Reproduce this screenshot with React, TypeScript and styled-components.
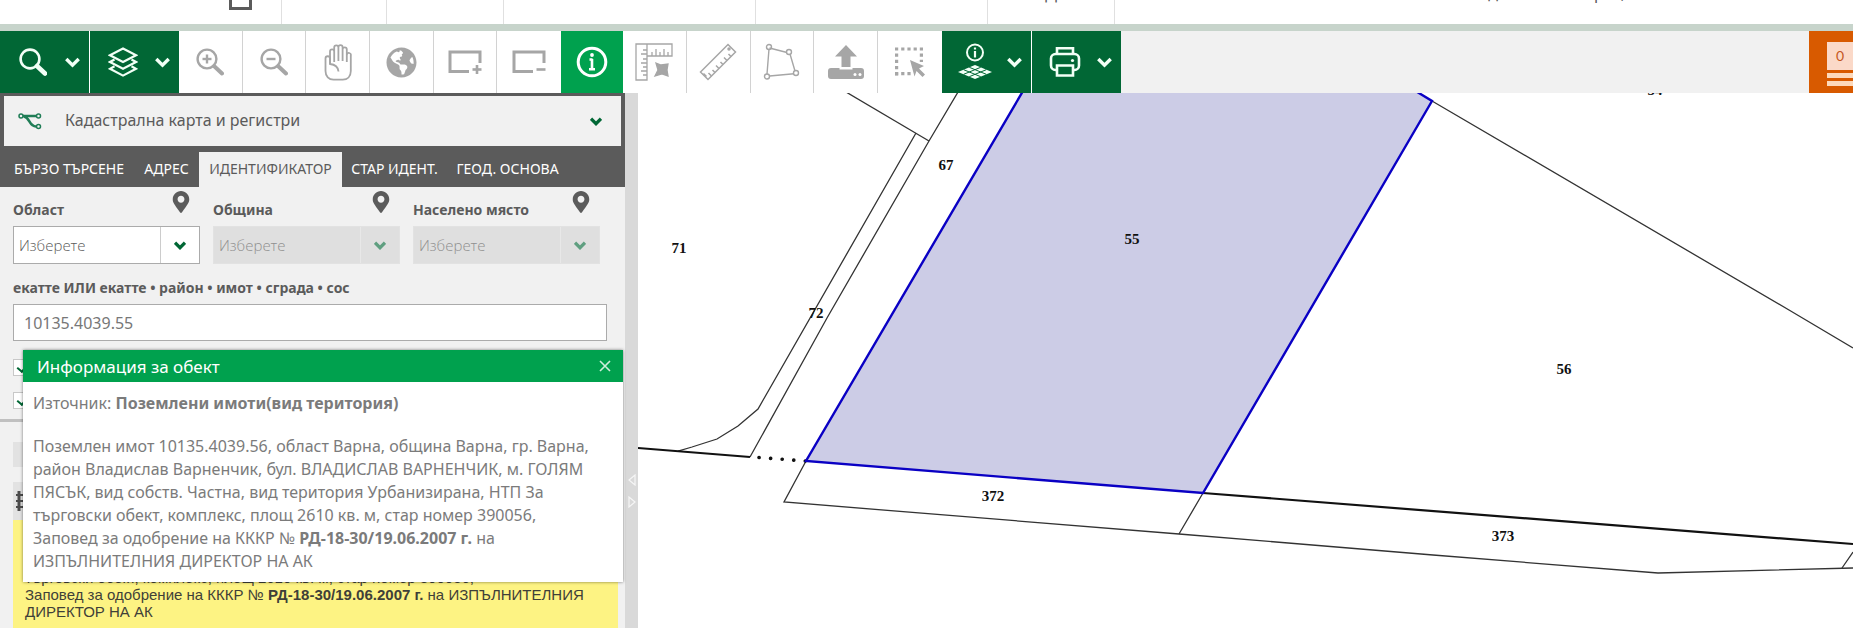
import React from 'react';
import styled, { createGlobalStyle } from 'styled-components';
import { FaGlobeAmericas, FaMapMarkerAlt } from 'react-icons/fa';

const color = {
  darkGreen: '#016735',
  green: '#00a14e',
  band: '#c7d4cb',
  slate: '#5b5b5b',
  panel: '#f1f1f1',
  icon: '#a6a6a6',
  line: '#d2d2d2',
  orange: '#d85a00',
  yellow: '#fdf383',
  parcel: '#cccce6',
  selection: '#0a00c4',
};

const GlobalStyle = createGlobalStyle`
  *, *::before, *::after { box-sizing: border-box; }
  body {
    margin: 0;
    background: #fff;
    color: ${color.slate};
    font-family: "Noto Sans", "Open Sans", sans-serif;
    font-size: 16px;
  }
  button, input, select { font: inherit; color: inherit; margin: 0; border-radius: 0; }
`;

const Page = styled.div`
  display: flex;
  flex-direction: column;
  height: 100vh;
  overflow: hidden;
`;

/* ---------- header ---------- */

const Header = styled.header`
  flex: none;
  display: flex;
  height: 31px;
  overflow: hidden;
  border-bottom: 7px solid ${color.band};
`;

const HeaderCell = styled.div<{ $width?: number }>`
  flex: ${(p) => (p.$width ? `0 0 ${p.$width}px` : '1')};
  height: 24px;
  overflow: hidden;
  display: flex;
  align-items: flex-start;
  justify-content: center;
  border-right: ${(p) => (p.$width ? `1px solid #e0e0e0` : '0')};
`;

const HomeMark = styled.span`
  width: 23px;
  height: 10px;
  margin: 0 29px 0 auto;
  border: 3px solid ${color.slate};
  border-top: 0;
`;

const HeaderText = styled.span`
  margin-top: -16px;
  line-height: 20px;
`;

const HeaderInfo = styled.span`
  display: flex;
  gap: 96px;
  margin: -17px 228px 0 auto;
  line-height: 20px;
`;

const HeaderTail = styled.span`
  display: flex;
  gap: 17px;
`;

/* ---------- toolbar ---------- */

const Toolbar = styled.nav`
  flex: none;
  display: flex;
  height: 62px;
  background: ${color.panel};
`;

const MenuButton = styled.button<{ $divided?: boolean }>`
  flex: none;
  display: flex;
  align-items: center;
  width: ${(p) => (p.$divided ? 90 : 89)}px;
  padding: 0;
  border: 0;
  border-right: ${(p) => (p.$divided ? '1px solid #fff' : '0')};
  background: ${color.darkGreen};
  color: #f2fff6;
`;

const IconCell = styled.span`
  display: flex;
  justify-content: center;
  flex: 0 0 65px;
`;

const ToolGroup = styled.div<{ $width: number }>`
  flex: none;
  display: flex;
  width: ${(p) => p.$width}px;
  background: #fff;
`;

const ToolButton = styled.button`
  flex: 1;
  display: flex;
  align-items: center;
  justify-content: center;
  padding: 0;
  border: 0;
  border-right: 1px solid ${color.line};
  background: #fff;
  color: ${color.icon};
  &:last-child { border-right-color: #fff; }
`;

const ActiveTool = styled.button`
  flex: 0 0 62px;
  display: flex;
  align-items: center;
  justify-content: center;
  padding: 0;
  border: 0;
  background: ${color.green};
  color: #fff;
`;

const BasketButton = styled.button`
  flex: 0 0 44px;
  margin-left: auto;
  display: flex;
  flex-direction: column;
  gap: 3px;
  padding: 11px 0 0 18px;
  border: 0;
  background: ${color.orange};
`;

const BasketCount = styled.span`
  width: 100%;
  height: 28px;
  padding-left: 9px;
  background: #fbd9c8;
  color: #c4561d;
  font-family: Lato, sans-serif;
  font-size: 14px;
  line-height: 28px;
  text-align: left;
`;

const BasketLine = styled.span`
  width: 100%;
  height: 5px;
  background: #fdd9bb;
`;

/* ---------- side panel ---------- */

const Main = styled.main`
  flex: 1;
  min-height: 0;
  display: flex;
`;

const Side = styled.aside`
  position: relative;
  flex: 0 0 625px;
  display: flex;
  flex-direction: column;
  background: ${color.panel};
`;

const PanelHead = styled.div`
  flex: none;
  padding: 3px 4px 0;
  background: ${color.slate};
`;

const RegistryPicker = styled.label`
  position: relative;
  display: flex;
  align-items: center;
  height: 50px;
  background: ${color.panel};
`;

const PickerIcon = styled.svg`
  position: absolute;
  left: 14px;
  top: 16px;
`;

const PickerSelect = styled.select`
  appearance: none;
  width: 100%;
  height: 100%;
  padding: 0 60px 2px 61px;
  border: 0;
  background: transparent;
`;

const PickerArrow = styled.span`
  position: absolute;
  right: 19px;
  top: 21px;
  display: flex;
  color: ${color.darkGreen};
  pointer-events: none;
`;

const Tabs = styled.div`
  display: grid;
  grid-template-columns: 130px 65px 143px 105px 121px;
  height: 35px;
  margin-top: 6px;
`;

const Tab = styled.button<{ $active?: boolean }>`
  padding: 0 0 2px;
  border: 0;
  background: ${(p) => (p.$active ? color.panel : 'transparent')};
  color: ${(p) => (p.$active ? color.slate : '#fff')};
  font-size: 14px;
  white-space: nowrap;
`;

const Form = styled.form`
  flex: none;
  display: flex;
  flex-direction: column;
  padding: 4px 18px 0 13px;
`;

const SelectRow = styled.div`
  display: grid;
  grid-template-columns: repeat(3, 187px);
  gap: 13px;
`;

const Field = styled.div`
  display: flex;
  flex-direction: column;
`;

const FieldHead = styled.div`
  display: flex;
  justify-content: space-between;
  height: 35px;
  padding-right: 8px;
`;

const FieldLabel = styled.label`
  padding-top: 9px;
  font-size: 14px;
  line-height: 20px;
  font-weight: 700;
`;

const SelectShell = styled.div<{ $disabled?: boolean }>`
  position: relative;
  height: 38px;
  border: 1px solid ${(p) => (p.$disabled ? '#e2e2e2' : '#ababab')};
  background: ${(p) => (p.$disabled ? '#dfdfdf' : '#fff')};
  color: ${(p) => (p.$disabled ? '#8f8f8f' : '#5b5b5b')};
`;

const ShellSelect = styled.select`
  appearance: none;
  width: 100%;
  height: 100%;
  padding: 0 42px 0 5px;
  border: 0;
  background: transparent;
  font-family: "Open Sans", "Noto Sans", sans-serif;
  font-size: 15px;
  font-weight: 300;
  opacity: 1;
`;

const ShellArrow = styled.span<{ $disabled?: boolean }>`
  position: absolute;
  right: 0;
  top: 0;
  bottom: 0;
  width: 39px;
  display: flex;
  align-items: center;
  justify-content: center;
  border-left: 1px solid ${(p) => (p.$disabled ? '#e8e8e8' : '#ccc')};
  color: ${(p) => (p.$disabled ? '#5f9f80' : color.darkGreen)};
  pointer-events: none;
`;

const IdLabel = styled.label`
  padding: 14px 0 6px;
  font-size: 14px;
  line-height: 20px;
  font-weight: 700;
`;

const IdInput = styled.input`
  width: 594px;
  height: 37px;
  padding: 0 10px;
  border: 1px solid #ababab;
  background: #fff;
  color: #777;
`;

const Checks = styled.div`
  display: flex;
  flex-direction: column;
  gap: 16px;
  padding: 18px 0 10px;
`;

const Check = styled.input`
  appearance: none;
  position: relative;
  width: 17px;
  height: 17px;
  border: 1px solid #c8c8c8;
  background: #fff;
  &:checked::after {
    content: '';
    position: absolute;
    left: 5px;
    top: 2px;
    width: 7px;
    height: 10px;
    border: solid ${color.darkGreen};
    border-width: 0 2px 2px 0;
    transform: rotate(40deg);
  }
`;

const Rule = styled.hr`
  flex: none;
  height: 3px;
  margin: 0 6px 0 0;
  border: 0;
  background: #c0c0c0;
`;

const Results = styled.section`
  flex: 1;
  min-height: 0;
  display: flex;
  flex-direction: column;
  padding: 20px 7px 0 13px;
`;

const ResultBar = styled.div`
  flex: none;
  height: 25px;
  margin-bottom: 15px;
  background: #e2e2e2;
`;

const ResultHead = styled.div`
  flex: none;
  display: flex;
  align-items: center;
  height: 38px;
  padding-left: 3px;
  background: #e2e2e2;
`;

const ResultText = styled.p`
  flex: 1;
  min-height: 0;
  margin: 0;
  padding: 49px 12px 0;
  background: ${color.yellow};
  color: #3f4038;
  font-family: "Liberation Sans", Arial, sans-serif;
  font-size: 15px;
  line-height: 17px;
`;

/* ---------- info dialog ---------- */

const Dialog = styled.section`
  position: absolute;
  left: 23px;
  top: 257px;
  width: 600px;
  background: #fff;
  box-shadow: 0 0 3px rgba(0, 0, 0, 0.5);
`;

const DialogHead = styled.header`
  display: flex;
  align-items: center;
  justify-content: space-between;
  height: 32px;
  padding: 0 12px 0 14px;
  background: ${color.green};
  color: #fff;
`;

const DialogTitle = styled.h2`
  margin: 0;
  font-size: 17px;
  font-weight: 400;
`;

const CloseButton = styled.button`
  display: flex;
  padding: 0;
  border: 0;
  background: transparent;
  color: #cfeedd;
`;

const DialogBody = styled.div`
  height: 200px;
  padding: 10px;
  color: #7b7b7b;
  line-height: 23px;
  white-space: nowrap;
`;

const Source = styled.p`
  margin: 0 0 20px;
`;

const Details = styled.p`
  margin: 0;
`;

/* ---------- splitter and map ---------- */

const Splitter = styled.div`
  flex: 0 0 13px;
  display: flex;
  flex-direction: column;
  align-items: center;
  gap: 10px;
  padding-top: 381px;
  background: #d9d9d9;
`;

const MapPane = styled.div`
  flex: 1;
  min-width: 0;
  overflow: hidden;
`;

const MapDrawing = styled.svg`
  display: block;
  width: 100%;
  height: 100%;
  font-family: "Liberation Serif", serif;
  font-size: 15px;
  font-weight: 700;
  fill: #111;
`;

/* ---------- icons ---------- */

const Icon = ({ w, h, children, sw = 2 }: { w: number; h: number; sw?: number; children: React.ReactNode }) => (
  <svg width={w} height={h} viewBox={`0 0 ${w} ${h}`} fill="none" stroke="currentColor" strokeWidth={sw} aria-hidden="true">
    {children}
  </svg>
);

const Chevron = ({ small }: { small?: boolean }) => (
  <svg width={small ? 12 : 15} height={small ? 9 : 11} viewBox="0 0 15 11" fill="none" stroke="currentColor" strokeWidth={small ? 4 : 3.4} aria-hidden="true">
    <path d="M1.3 2 7.5 8.2 13.7 2" />
  </svg>
);

const Magnifier = ({ sign }: { sign?: 'plus' | 'minus' }) => (
  <Icon w={28} h={28} sw={sign ? 2.4 : 2.6}>
    <circle cx="11" cy="11" r="9.4" />
    <path d="M18 18 26 25.5" strokeWidth={sign ? 4 : 4.6} strokeLinecap="round" />
    {sign && <path d="M6.5 11h9" />}
    {sign === 'plus' && <path d="M11 6.5v9" />}
  </Icon>
);

const Layers = () => (
  <Icon w={30} h={30} sw={2.2}>
    <path d="M15 1.5 28 8.2 15 15 2 8.2z" />
    <path d="M6.5 12.5 2 15l13 6.8L28 15l-4.5-2.5" />
    <path d="M6.5 19.3 2 21.8l13 6.8 13-6.8-4.5-2.5" />
  </Icon>
);

const Hand = () => (
  <Icon w={28} h={38} sw={1.8}>
    <path d="M6 21V8.500a2.100 2.100 0 0 1 4.200 0V19M10.200 9V4.500a2.100 2.100 0 0 1 4.200 0V18M14.400 4.200a2.100 2.100 0 0 1 4.200 0V18M18.600 6.500a2.100 2.100 0 0 1 4.200 0V19" />
    <path d="M22.800 11.500a2 2 0 0 1 4 1V28c0 5.500-3.400 8.600-8 8.600h-9.300c-4.600 0-8-3.100-8-8.600V15.500a2.200 2.200 0 0 1 4.500 0V21c4.500.4 8 2.500 8.500 7.500" />
  </Icon>
);

const Extent = ({ sign }: { sign: 'plus' | 'minus' }) => (
  <Icon w={34} h={26} sw={3}>
    <path d="M21 22.500H2V3h30v11" />
    <path d="M24.500 20.500h9" strokeWidth={2.600} />
    {sign === 'plus' && <path d="M29 16v9" strokeWidth={2.600} />}
  </Icon>
);

const InfoMark = () => (
  <Icon w={32} h={32} sw={3}>
    <circle cx="16" cy="16" r="13.800" />
    <path d="M16 13v10.500M13.500 13.500h3M13 23.200h6" strokeWidth={2.600} />
    <circle cx="16" cy="9" r="1.900" fill="currentColor" stroke="none" />
  </Icon>
);

const RulerSquare = () => (
  <Icon w={38} h={38} sw={1.300}>
    <path d="M1 1h36v12H12v24H1zM12 1v12" />
    <path d="M12 7H8M12 11H6M12 16H8M12 20H6M12 24H8M12 28H6M12 32H8M17 13V9M21 13V6M25 13V9M29 13V6M33 13V9" />
    <path d="m21 20 5 2 7-1-1 6 1 6-6-2-7 2 3-6z" fill="currentColor" />
  </Icon>
);

const Ruler = () => (
  <Icon w={38} h={38} sw={1.500}>
    <path d="M1.500 29 29 1.500l7.500 7.500L9 36.500z" />
    <path d="m4.500 30.500 3 3" />
    <path d="m9 30 2.500-2.500M13 33l-3-3" stroke="none" />
    <path d="m12.500 33-3-3M16 29.500l-2.500-2.500M20 25.500l-3-3M24 21.500l-2.500-2.500M28 17.500l-3-3M32 13.500 29.500 11" />
    <circle cx="30" cy="6" r="1" />
  </Icon>
);

const PolygonShape = () => (
  <Icon w={38} h={38} sw={1.400}>
    <path d="M6.500 5 24 9.500M27 11l5 17M31 30.800 6.500 33M4 31 6 6" />
    <circle cx="6" cy="4" r="2.500" />
    <circle cx="26" cy="9" r="2.500" />
    <circle cx="33" cy="30" r="2.500" />
    <circle cx="4" cy="33.500" r="2.500" />
  </Icon>
);

const Upload = () => (
  <Icon w={36} h={36}>
    <path d="M18 1 29 12.500h-6.500V23h-9V12.500H7z" fill="currentColor" stroke="none" />
    <path d="M3 24h8.500v1.500h13V24H33a3 3 0 0 1 3 3v5a3 3 0 0 1-3 3H3a3 3 0 0 1-3-3v-5a3 3 0 0 1 3-3z" fill="currentColor" stroke="none" />
    <circle cx="27" cy="30.500" r="1.500" fill="#fff" stroke="none" />
    <circle cx="32" cy="30.500" r="1.500" fill="#fff" stroke="none" />
  </Icon>
);

const SelectArea = () => (
  <Icon w={32} h={32} sw={3.200}>
    <path d="M1 3h28" strokeDasharray="3.200 3" />
    <path d="M2.600 7.600V30" strokeDasharray="3.200 3" />
    <path d="M27.400 7.600V16" strokeDasharray="3.200 3" />
    <path d="M1 27.600h16" strokeDasharray="3.200 3" />
    <path d="m16 14 14 6-5 2.500 6 6-2.500 2.500-6-6-2 5.500z" fill="currentColor" stroke="none" />
  </Icon>
);

const LayerInfo = () => (
  <Icon w={36} h={38}>
    <circle cx="18" cy="9.500" r="8" />
    <path d="M18 8v6.500M18 4.500v2" strokeWidth={2.200} />
    <path d="M18 22 35 29 18 36 1 29z" fill="currentColor" stroke="none" />
    <path d="m12.300 24.300 17 7M6.700 26.700l17 7M23.700 24.300l-17 7M29.300 26.700l-17 7" stroke={color.darkGreen} strokeWidth={1} />
  </Icon>
);

const Printer = () => (
  <Icon w={32} h={32} sw={2.600}>
    <path d="M8 8V2.300h16V8" />
    <path d="M8 24H6.500a4.500 4.500 0 0 1-4.500-4.500v-7A4.500 4.500 0 0 1 6.500 8h19a4.500 4.500 0 0 1 4.500 4.500v7a4.500 4.500 0 0 1-4.500 4.500H24" />
    <path d="M8 19.500h16v10H8z" />
    <circle cx="23.500" cy="14.500" r="1.600" fill="currentColor" stroke="none" />
  </Icon>
);

const DragGrip = () => (
  <svg width="8" height="20" viewBox="0 0 8 20" stroke="#4c4c4c" strokeWidth="3" aria-hidden="true">
    <path d="M3 0v20" />
    <path d="M0 4h8M0 10h8M0 16h8" strokeWidth="2" />
  </svg>
);

/* ---------- parts ---------- */

const MenuTool = ({ label, divided, children }: { label: string; divided?: boolean; children: React.ReactNode }) => (
  <MenuButton type="button" aria-label={label} $divided={divided}>
    <IconCell>{children}</IconCell>
    <Chevron />
  </MenuButton>
);

const PlaceField = ({ id, label, disabled }: { id: string; label: string; disabled?: boolean }) => (
  <Field>
    <FieldHead>
      <FieldLabel htmlFor={id}>{label}</FieldLabel>
      <FaMapMarkerAlt size={22} aria-hidden="true" />
    </FieldHead>
    <SelectShell $disabled={disabled}>
      <ShellSelect id={id} disabled={disabled}>
        <option>Изберете</option>
      </ShellSelect>
      <ShellArrow $disabled={disabled}>
        <Chevron small />
      </ShellArrow>
    </SelectShell>
  </Field>
);

const parcelLabels: [number, number, string][] = [
  [41, 160, '71'],
  [308, 77, '67'],
  [178, 225, '72'],
  [494, 151, '55'],
  [926, 281, '56'],
  [355, 408, '372'],
  [865, 448, '373'],
  [1017, 2, '54'],
];

const CadastreMap = () => (
  <MapDrawing viewBox="0 0 1215 535" preserveAspectRatio="xMinYMin slice" role="img" aria-label="Кадастрална карта">
    <g fill="none" stroke="#333" strokeWidth="1.300">
      <path d="M208-1 291 48" />
      <path d="M278 40 120 316 100 333 79 346 54 354 40 358" />
      <path d="M320-1 291 48 189 225 112 364" />
      <path d="M168 368 146 409 541 441 795 462 1020 480 1215 475" />
      <path d="M565 400 541 441M1215 459 1204 475" />
      <path d="M794 8 1151 217 1215 255" />
    </g>
    <g fill="none" stroke="#111" strokeWidth="2.200">
      <path d="M0 355 112 364M565 400 1215 451" />
      <path d="M121 364.500 168 368" strokeWidth="3.600" strokeLinecap="round" strokeDasharray="0.100 11.500" />
    </g>
    <path d="M385-2 168 368 565 400 794 8 776-3z" fill={color.parcel} stroke={color.selection} strokeWidth="2.400" />
    {parcelLabels.map(([x, y, text]) => (
      <text key={text} x={x} y={y} textAnchor="middle">
        {text}
      </text>
    ))}
  </MapDrawing>
);

export default function App() {
  return (
    <Page>
      <GlobalStyle />
      <Header>
        <HeaderCell $width={282}>
          <HomeMark />
        </HeaderCell>
        <HeaderCell $width={105} />
        <HeaderCell $width={117} />
        <HeaderCell $width={252} />
        <HeaderCell $width={232} />
        <HeaderCell $width={127}>
          <HeaderText>Д</HeaderText>
        </HeaderCell>
        <HeaderCell>
          <HeaderInfo>
            <span>д</span>
            <HeaderTail>
              <span>р</span>
              <span>,</span>
            </HeaderTail>
          </HeaderInfo>
        </HeaderCell>
      </Header>

      <Toolbar aria-label="Инструменти">
        <MenuTool label="Търсене" divided>
          <Magnifier />
        </MenuTool>
        <MenuTool label="Слоеве">
          <Layers />
        </MenuTool>
        <ToolGroup $width={382}>
          <ToolButton type="button" aria-label="Увеличи"><Magnifier sign="plus" /></ToolButton>
          <ToolButton type="button" aria-label="Намали"><Magnifier sign="minus" /></ToolButton>
          <ToolButton type="button" aria-label="Премести"><Hand /></ToolButton>
          <ToolButton type="button" aria-label="Цялата карта"><FaGlobeAmericas size={31} /></ToolButton>
          <ToolButton type="button" aria-label="Увеличи обхват"><Extent sign="plus" /></ToolButton>
          <ToolButton type="button" aria-label="Намали обхват"><Extent sign="minus" /></ToolButton>
        </ToolGroup>
        <ActiveTool type="button" aria-label="Информация" aria-pressed="true"><InfoMark /></ActiveTool>
        <ToolGroup $width={319}>
          <ToolButton type="button" aria-label="Площ"><RulerSquare /></ToolButton>
          <ToolButton type="button" aria-label="Разстояние"><Ruler /></ToolButton>
          <ToolButton type="button" aria-label="Полигон"><PolygonShape /></ToolButton>
          <ToolButton type="button" aria-label="Качване"><Upload /></ToolButton>
          <ToolButton type="button" aria-label="Избор"><SelectArea /></ToolButton>
        </ToolGroup>
        <MenuTool label="Информация за слой" divided>
          <LayerInfo />
        </MenuTool>
        <MenuTool label="Печат">
          <Printer />
        </MenuTool>
        <BasketButton type="button" aria-label="Количка">
          <BasketCount>0</BasketCount>
          <BasketLine />
          <BasketLine />
        </BasketButton>
      </Toolbar>

      <Main>
        <Side>
          <PanelHead>
            <RegistryPicker>
              <PickerIcon width="24" height="18" viewBox="0 0 24 18" fill="none" stroke="#1f7d56" strokeWidth="1.500" aria-hidden="true">
                <path d="M5 4h13M6 4.500c6 1 5 10 12 10" strokeWidth="2.600" />
                <circle cx="3" cy="4" r="2" />
                <circle cx="20.500" cy="4" r="2" />
                <circle cx="20.500" cy="14.500" r="2" />
              </PickerIcon>
              <PickerSelect aria-label="Регистър">
                <option>Кадастрална карта и регистри</option>
              </PickerSelect>
              <PickerArrow>
                <Chevron small />
              </PickerArrow>
            </RegistryPicker>
            <Tabs role="tablist">
              <Tab type="button" role="tab">БЪРЗО ТЪРСЕНЕ</Tab>
              <Tab type="button" role="tab">АДРЕС</Tab>
              <Tab type="button" role="tab" aria-selected="true" $active>ИДЕНТИФИКАТОР</Tab>
              <Tab type="button" role="tab">СТАР ИДЕНТ.</Tab>
              <Tab type="button" role="tab">ГЕОД. ОСНОВА</Tab>
            </Tabs>
          </PanelHead>

          <Form>
            <SelectRow>
              <PlaceField id="region" label="Област" />
              <PlaceField id="municipality" label="Община" disabled />
              <PlaceField id="settlement" label="Населено място" disabled />
            </SelectRow>
            <IdLabel htmlFor="identifier">екатте ИЛИ екатте • район • имот • сграда • сос</IdLabel>
            <IdInput id="identifier" type="text" defaultValue="10135.4039.55" />
            <Checks>
              <Check type="checkbox" defaultChecked aria-label="Имоти" />
              <Check type="checkbox" defaultChecked aria-label="Сгради" />
            </Checks>
          </Form>
          <Rule />
          <Results>
            <ResultBar />
            <ResultHead>
              <DragGrip />
            </ResultHead>
            <ResultText>
              търговски обект, комплекс, площ 2610 кв. м, стар номер 390056,
              <br />
              Заповед за одобрение на КККР № <b>РД-18-30/19.06.2007 г.</b> на ИЗПЪЛНИТЕЛНИЯ
              <br />
              ДИРЕКТОР НА АК
            </ResultText>
          </Results>

          <Dialog role="dialog" aria-labelledby="dialog-title">
            <DialogHead>
              <DialogTitle id="dialog-title">Информация за обект</DialogTitle>
              <CloseButton type="button" aria-label="Затвори">
                <Icon w={12} h={12} sw={1.600}>
                  <path d="M1 1 11 11M11 1 1 11" />
                </Icon>
              </CloseButton>
            </DialogHead>
            <DialogBody>
              <Source>
                Източник: <b>Поземлени имоти(вид територия)</b>
              </Source>
              <Details>
                Поземлен имот 10135.4039.56, област Варна, община Варна, гр. Варна,
                <br />
                район Владислав Варненчик, бул. ВЛАДИСЛАВ ВАРНЕНЧИК, м. ГОЛЯМ
                <br />
                ПЯСЪК, вид собств. Частна, вид територия Урбанизирана, НТП За
                <br />
                търговски обект, комплекс, площ 2610 кв. м, стар номер 390056,
                <br />
                Заповед за одобрение на КККР № <b>РД-18-30/19.06.2007 г.</b> на
                <br />
                ИЗПЪЛНИТЕЛНИЯ ДИРЕКТОР НА АК
              </Details>
            </DialogBody>
          </Dialog>
        </Side>

        <Splitter>
          <Icon w={8} h={12} sw={1.200}>
            <g stroke="#f6f6f6"><path d="M7 1v10L1 6z" /></g>
          </Icon>
          <Icon w={8} h={12} sw={1.200}>
            <g stroke="#f6f6f6"><path d="M1 1v10l6-5z" /></g>
          </Icon>
        </Splitter>

        <MapPane>
          <CadastreMap />
        </MapPane>
      </Main>
    </Page>
  );
}
